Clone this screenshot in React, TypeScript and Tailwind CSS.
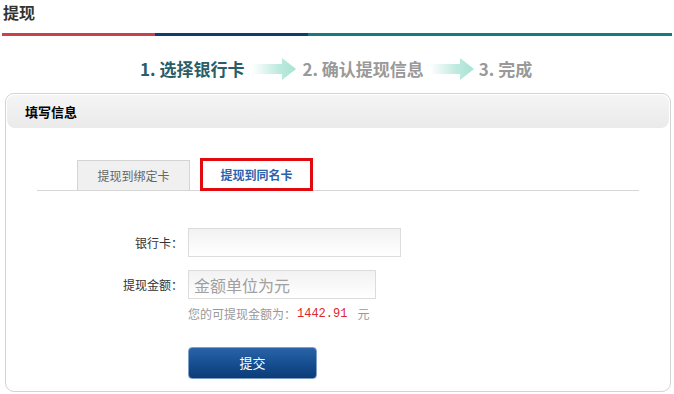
import React from "react";

function Arrow() {
  return (
    <svg width="44" height="22" viewBox="0 0 44 22" className="block">
      <defs>
        <linearGradient id="ag" x1="0" y1="0" x2="1" y2="0">
          <stop offset="0" stopColor="#ffffff" />
          <stop offset="0.6" stopColor="#bfeadf" />
          <stop offset="1" stopColor="#a6e3d2" />
        </linearGradient>
      </defs>
      <path d="M0 6 H30 V0 L44 11 L30 22 V16 H0 Z" fill="url(#ag)" />
    </svg>
  );
}

export default function App() {
  const font = { fontFamily: '"Noto Sans CJK SC", "Liberation Sans", sans-serif' };
  return (
    <div
      className="w-[674px] h-[394px] bg-white overflow-hidden text-[#333]"
      style={font}
    >
      <div className="pl-[3px] pt-[1px] h-[33px] text-[16px] font-bold leading-[22px] text-[#333]">
        提现
      </div>
      <div className="mx-[2px] h-[3px] flex">
        <div className="w-[153px] bg-[#c8424a]" />
        <div className="w-[153px] bg-[#0e3e6d]" />
        <div className="flex-1 bg-[#167a7e]" />
      </div>
      <div className="flex items-center h-[24px] mt-[21px] pl-[140px] text-[17px] font-bold leading-[24px]">
        <span className="text-[#2b5d68]">1. 选择银行卡</span>
        <span className="ml-[8px] mr-[6px]"><Arrow /></span>
        <span className="text-[#999]">2. 确认提现信息</span>
        <span className="ml-[6px] mr-[5px]"><Arrow /></span>
        <span className="text-[#999]">3. 完成</span>
      </div>
      <div className="ml-[5px] mt-[12px] w-[666px] h-[299px] border border-[#d3d3d3] rounded-[9px] flex flex-col">
        <div className="h-[33px] mx-[1px] mt-[1px] rounded-[8px] bg-gradient-to-b from-[#f5f5f5] to-[#eaeaea] flex items-center pl-[18px] text-[13px] font-bold text-black">
          填写信息
        </div>
        <div className="mt-[31px] mx-[31px] h-[32px] border-b border-[#d6d6d6] flex items-end pl-[40px]">
          <div className="w-[113px] h-[30px] bg-[#f0f0f0] border border-[#d4d4d4] border-b-0 flex items-center justify-center text-[12px] text-[#666]">
            提现到绑定卡
          </div>
          <div className="ml-[10px] w-[113px] h-[33px] mb-[-1px] bg-white border-[3px] border-[#e00a0f] flex items-center justify-center text-[12px] font-bold text-[#2b63ab]">
            提现到同名卡
          </div>
        </div>
        <div className="mt-[37px] flex flex-col">
          <div className="flex items-center h-[29px]">
            <div className="w-[177px] text-right text-[12px] text-[#333]">银行卡：</div>
            <div className="ml-[5px] w-[213px] h-[29px] border border-[#dcdcdc] bg-gradient-to-b from-[#f2f2f2] to-white" />
          </div>
          <div className="flex items-center h-[29px] mt-[13px]">
            <div className="w-[177px] text-right text-[12px] text-[#333]">提现金额：</div>
            <div className="ml-[5px] w-[188px] h-[29px] border border-[#dcdcdc] bg-gradient-to-b from-[#f2f2f2] to-white flex items-center pl-[5px] text-[16px] text-[#a0a0a0]">
              金额单位为元
            </div>
          </div>
          <div className="ml-[182px] mt-[4px] h-[22px] flex items-center text-[12px] text-[#999]">
            您的可提现金额为：
            <span className="text-[#e0262e] ml-[1px]" style={{ fontFamily: '"Liberation Mono", monospace' }}>
              1442.91
            </span>
            <span className="ml-[10px]">元</span>
          </div>
          <div className="ml-[182px] mt-[22px] w-[129px] h-[32px] rounded-[4px] border border-[#7f9fc7] bg-gradient-to-b from-[#2a63a7] via-[#164f92] to-[#0d3c78] flex items-center justify-center text-[13px] text-white">
            提交
          </div>
        </div>
      </div>
    </div>
  );
}
